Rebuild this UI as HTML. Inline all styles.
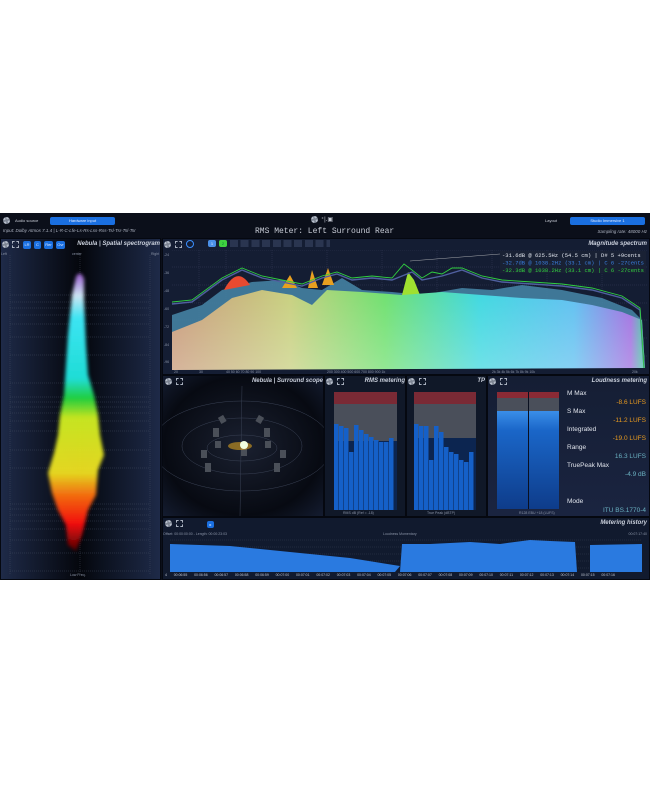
<!DOCTYPE html>
<html><head><meta charset="utf-8">
<style>
*{margin:0;padding:0;box-sizing:border-box}
body{width:650px;height:794px;background:#fff;position:relative;overflow:hidden;font-family:"Liberation Sans",sans-serif}
.a{position:absolute}
.app{left:0;top:213px;width:650px;height:367px;background:#0b0f1a}
.pan{position:absolute;background:linear-gradient(160deg,#1b2640,#0e1526 60%,#121c33);border:1px solid #050810}
.t{position:absolute;color:#c9cfdb;font-size:6px;font-style:italic;font-weight:bold;white-space:nowrap;text-align:right}
.s{position:absolute;color:#8a93a6;font-size:3.5px;white-space:nowrap}
.btn{position:absolute;background:#1a6fe0;border-radius:2px;color:#dfeaff;font-size:4px;text-align:center;line-height:8px;height:8px}
.gear{position:absolute;width:7px;height:7px;border-radius:50%;border:2px dotted #b8bfcc;background:#7d8593}
.fs{position:absolute;width:7px;height:7px;border:1px dashed #aab2c0}
</style></head><body>
<div class="a app"></div>
<!-- top bar -->
<div class="gear" style="left:3px;top:217px"></div>
<div class="s" style="left:15px;top:218px;color:#c8ccd6;font-size:4px">Audio source</div>
<div class="btn" style="left:50px;top:217px;width:65px;font-size:4px">Hardware input</div>
<div class="s" style="left:3px;top:228px;font-style:italic;font-size:4.5px;color:#aeb4c2">Input: Dolby Atmos 7.1.4 | L-R-C-Lfe-Ls-Rs-Lss-Rss-Tsl-Tsr-Tsl-Tsr</div>
<div class="gear" style="left:311px;top:216px"></div>
<div class="s" style="left:321px;top:216px;color:#c8ccd6;font-size:6px">⁺|.▣</div>
<div class="a" style="left:255px;top:227px;color:#c8ccd6;font-family:'Liberation Mono',monospace;font-size:8px;white-space:nowrap">RMS Meter: Left Surround Rear</div>
<div class="s" style="left:545px;top:218px;color:#c8ccd6;font-size:4px">Layout</div>
<div class="btn" style="left:570px;top:217px;width:75px">Studio Immersive 1</div>
<div class="s" style="right:3px;top:229px;font-style:italic;font-size:4.5px;color:#aeb4c2">Sampling rate: 48000 Hz</div>

<!-- Left panel -->
<div class="pan" style="left:0;top:238px;width:161px;height:342px;background:linear-gradient(90deg,#1e2a48,#0c111e 35%,#04060c 50%,#0c1220 65%,#1e2a48)"></div>
<div class="gear" style="left:2px;top:241px"></div><div class="fs" style="left:12px;top:241px"></div>
<div class="btn" style="left:23px;top:241px;width:8px">LR</div>
<div class="btn" style="left:34px;top:241px;width:7px">C</div>
<div class="btn" style="left:44px;top:241px;width:9px">Rer</div>
<div class="btn" style="left:56px;top:241px;width:9px">Ovr</div>
<div class="t" style="right:490px;top:241px">Nebula | Spatial spectrogram</div>
<div class="s" style="left:1px;top:252px">Left</div><div class="s" style="left:72px;top:252px">center</div><div class="s" style="left:151px;top:252px">Right</div>
<svg class="a" style="left:0;top:255px" width="160" height="325">
<defs>
<linearGradient id="sg" x1="0" y1="0" x2="0" y2="1">
<stop offset="0" stop-color="#a060d8"/><stop offset=".08" stop-color="#d8f0ff"/><stop offset=".16" stop-color="#40f0ff"/><stop offset=".38" stop-color="#20e8e0"/><stop offset=".45" stop-color="#20d840"/><stop offset=".52" stop-color="#d0f020"/><stop offset=".72" stop-color="#f0e020"/><stop offset=".8" stop-color="#ff7010"/><stop offset=".9" stop-color="#ff1010"/><stop offset="1" stop-color="#500000"/>
</linearGradient>
<filter id="bl"><feGaussianBlur stdDeviation="1.8"/></filter>
</defs>
<g stroke="#4a5468" stroke-width=".4" stroke-dasharray="1,1">
<line x1="10" y1="0" x2="10" y2="320"/><line x1="80" y1="0" x2="80" y2="320"/><line x1="150" y1="0" x2="150" y2="320"/>
<line x1="10" y1="40" x2="150" y2="40"/><line x1="10" y1="47" x2="150" y2="47"/><line x1="10" y1="53" x2="150" y2="53"/><line x1="10" y1="60" x2="150" y2="60"/><line x1="10" y1="69" x2="150" y2="69"/><line x1="10" y1="82" x2="150" y2="82"/><line x1="10" y1="100" x2="150" y2="100"/><line x1="10" y1="128" x2="150" y2="128"/>
<line x1="10" y1="142" x2="150" y2="142"/><line x1="10" y1="147" x2="150" y2="147"/><line x1="10" y1="152" x2="150" y2="152"/><line x1="10" y1="158" x2="150" y2="158"/><line x1="10" y1="166" x2="150" y2="166"/><line x1="10" y1="176" x2="150" y2="176"/><line x1="10" y1="195" x2="150" y2="195"/><line x1="10" y1="213" x2="150" y2="213"/><line x1="10" y1="249" x2="150" y2="249"/><line x1="10" y1="254" x2="150" y2="254"/><line x1="10" y1="260" x2="150" y2="260"/><line x1="10" y1="266" x2="150" y2="266"/><line x1="10" y1="274" x2="150" y2="274"/><line x1="10" y1="285" x2="150" y2="285"/><line x1="10" y1="298" x2="150" y2="298"/><line x1="10" y1="316" x2="150" y2="316"/>
</g>
<path filter="url(#bl)" fill="url(#sg)" opacity=".95" d="M76 22 Q80 14 84 24 L84 45 L86 90 L88 120 L94 140 L98 160 L100 180 L104 200 L98 215 L96 240 L88 255 L82 280 L76 296 L68 290 L66 270 L58 255 L52 238 L48 218 L54 198 L58 180 L60 160 L64 140 L66 110 L68 80 L72 40 Z"/>
</svg>
<div class="s" style="left:70px;top:573px">Low Freq.</div>

<!-- Magnitude spectrum -->
<div class="pan" style="left:162px;top:238px;width:488px;height:137px;background:#141d33"></div>
<div class="gear" style="left:164px;top:241px"></div><div class="fs" style="left:175px;top:241px"></div>
<div class="a" style="left:186px;top:240px;width:8px;height:8px;border:1px solid #3a8fff;border-radius:50%"></div>
<div class="btn" style="left:208px;top:240px;width:8px;height:7px;background:#4a90e8">1</div>
<div class="btn" style="left:219px;top:240px;width:8px;height:7px;background:#3fd040;color:#083">2</div>
<div class="a" style="left:230px;top:240px;width:100px;height:7px;background:repeating-linear-gradient(90deg,#2a3550 0 8px,transparent 8px 10.7px)"></div>
<div class="t" style="right:3px;top:241px">Magnitude spectrum</div>
<svg class="a" style="left:162px;top:250px" width="488" height="125">
<defs>
<linearGradient id="spg" x1="0" y1="0" x2="1" y2="0">
<stop offset="0" stop-color="#c89a7a"/><stop offset=".25" stop-color="#c8d080"/><stop offset=".45" stop-color="#70e070"/><stop offset=".65" stop-color="#40d8e0"/><stop offset=".85" stop-color="#60c0f0"/><stop offset=".97" stop-color="#a070e0"/><stop offset="1" stop-color="#40d0a0"/>
</linearGradient>
<linearGradient id="fd" x1="0" y1="0" x2="0" y2="1"><stop offset="0" stop-color="#fff" stop-opacity="0"/><stop offset="1" stop-color="#fff" stop-opacity=".25"/></linearGradient>
</defs>
<g stroke="#3a4560" stroke-width=".4" stroke-dasharray="1,1">
<line x1="10" y1="0" x2="485" y2="0"/><line x1="10" y1="17" x2="485" y2="17"/><line x1="10" y1="35" x2="485" y2="35"/><line x1="10" y1="53" x2="485" y2="53"/><line x1="10" y1="70" x2="485" y2="70"/><line x1="10" y1="88" x2="485" y2="88"/><line x1="10" y1="106" x2="485" y2="106"/>
<line x1="37" y1="0" x2="37" y2="118"/><line x1="64" y1="0" x2="64" y2="118"/><line x1="110" y1="0" x2="110" y2="118"/><line x1="165" y1="0" x2="165" y2="118"/><line x1="220" y1="0" x2="220" y2="118"/><line x1="275" y1="0" x2="275" y2="118"/><line x1="330" y1="0" x2="330" y2="118"/><line x1="385" y1="0" x2="385" y2="118"/><line x1="440" y1="0" x2="440" y2="118"/>
</g>
<path fill="#4a8fb0" opacity=".8" d="M10 65 L40 55 L60 40 L90 32 L120 30 L140 38 L160 40 L180 28 L200 40 L230 42 L260 45 L300 38 L330 40 L360 35 L400 40 L440 48 L470 60 L480 70 L483 118 L10 118Z"/>
<path fill="#e84a30" d="M62 40 Q75 15 88 35 Z"/>
<path fill="#e8a020" d="M120 38 L128 25 L135 38 Z M146 38 L150 20 L156 38 Z M160 35 L166 18 L172 35Z"/>
<path fill="#a0e030" d="M240 45 L246 22 L252 30 L258 45 Z"/>
<path fill="url(#spg)" d="M10 120 L10 82 L40 70 L70 48 L100 40 L130 45 L150 55 L165 40 L200 42 L240 45 L280 42 L320 45 L360 48 L400 50 L430 55 L460 62 L480 70 L483 118 Z"/>
<path fill="url(#fd)" d="M10 120 L10 82 L40 70 L70 48 L100 40 L130 45 L150 55 L165 40 L200 42 L240 45 L280 42 L320 45 L360 48 L400 50 L430 55 L460 62 L480 70 L483 118 Z"/>
<path fill="none" stroke="#5060a0" stroke-width="1.4" d="M10 54 L30 52 L60 30 L80 20 L100 28 L120 32 L140 36 L160 28 L175 24 L190 30 L210 28 L230 30 L250 22 L260 30 L280 26 L300 20 L320 28 L340 32 L370 34 L400 36 L430 40 L460 48 L478 60 L482 118"/>
<path fill="none" stroke="#30d040" stroke-width=".9" d="M10 52 L30 50 L60 28 L80 18 L100 26 L120 30 L140 34 L160 26 L175 22 L190 28 L210 26 L230 28 L242 14 L250 20 L260 28 L270 22 L280 24 L290 18 L300 18 L320 26 L340 30 L370 32 L400 34 L430 38 L460 46 L478 58 L482 118"/>
<line x1="248" y1="11" x2="338" y2="4" stroke="#ccc" stroke-width=".4"/>
<rect x="338" y="1" width="146" height="22" fill="#1a2235" opacity=".85"/>
<text x="340" y="7" font-family="Liberation Mono" font-size="5.5" fill="#e0e4ec">-31.6dB @  625.5Hz (54.5 cm) | D# 5  +9cents</text>
<text x="340" y="14.5" font-family="Liberation Mono" font-size="5.5" fill="#3a7fe0">-32.7dB @ 1038.2Hz (33.1 cm) | C 6 -27cents</text>
<text x="340" y="22" font-family="Liberation Mono" font-size="5.5" fill="#30d040">-32.3dB @ 1038.2Hz (33.1 cm) | C 6 -27cents</text>
<g font-size="3.5" fill="#8a93a6"><text x="2" y="6">-24</text><text x="2" y="24">-36</text><text x="2" y="42">-48</text><text x="2" y="60">-60</text><text x="2" y="78">-72</text><text x="2" y="96">-84</text><text x="2" y="113">-96</text>
<text x="12" y="123">20</text><text x="37" y="123">30</text><text x="64" y="123">40 50 60 70 80 90 100</text><text x="165" y="123">200 300 400 500 600 700 800 900 1k</text><text x="330" y="123">2k 3k 4k 5k 6k 7k 8k 9k 10k</text><text x="470" y="123">20k</text></g>
</svg>

<!-- Surround scope -->
<div class="pan" style="left:162px;top:375px;width:162px;height:142px;background:radial-gradient(ellipse at 50% 50%,#1a2030,#070a12 70%,#141c30)"></div>
<div class="gear" style="left:165px;top:378px"></div><div class="fs" style="left:176px;top:378px"></div>
<div class="t" style="right:327px;top:378px">Nebula | Surround scope</div>
<svg class="a" style="left:162px;top:386px" width="162" height="130">
<g fill="none" stroke="#3a4255" stroke-width=".5"><ellipse cx="80" cy="60" rx="90" ry="45"/><ellipse cx="80" cy="60" rx="60" ry="28"/><ellipse cx="80" cy="62" rx="35" ry="13"/><line x1="80" y1="0" x2="78" y2="130"/></g>
<g fill="#4a4f58"><rect x="57" y="30" width="6" height="7" transform="rotate(-30 60 33)"/><rect x="95" y="30" width="6" height="7" transform="rotate(30 98 33)"/><rect x="51" y="42" width="6" height="9"/><rect x="102" y="42" width="6" height="9"/><rect x="53" y="55" width="6" height="7"/><rect x="103" y="55" width="6" height="7"/><rect x="39" y="64" width="6" height="8"/><rect x="118" y="64" width="6" height="8"/><rect x="43" y="77" width="6" height="9"/><rect x="112" y="77" width="6" height="9"/><rect x="79" y="58" width="6" height="12"/></g>
<ellipse cx="78" cy="60" rx="12" ry="4" fill="#d8a020" opacity=".6"/>
<circle cx="82" cy="59" r="4" fill="#f0ffe0"/>
</svg>

<!-- RMS -->
<div class="pan" style="left:324px;top:375px;width:82px;height:142px;background:#101828"></div>
<div class="gear" style="left:326px;top:378px"></div><div class="fs" style="left:337px;top:378px"></div>
<div class="t" style="right:245px;top:378px">RMS metering</div>
<div class="a" style="left:334px;top:392px;width:63px;height:12px;background:#7a2a35"></div>
<div class="a" style="left:334px;top:404px;width:63px;height:37px;background:#4a4f5a"></div>
<div class="a" style="left:334px;top:441px;width:63px;height:69px;background:#0c2550"></div>
<svg class="a" style="left:334px;top:392px" width="63" height="118">
<g fill="#1560c8"><rect x="0" y="32" width="4.5" height="86"/><rect x="5" y="34" width="4.5" height="84"/><rect x="10" y="36" width="4.5" height="82"/><rect x="15" y="60" width="4.5" height="58"/><rect x="20" y="33" width="4.5" height="85"/><rect x="25" y="38" width="4.5" height="80"/><rect x="30" y="42" width="4.5" height="76"/><rect x="35" y="45" width="4.5" height="73"/><rect x="40" y="48" width="4.5" height="70"/><rect x="45" y="50" width="4.5" height="68"/><rect x="50" y="50" width="4.5" height="68"/><rect x="55" y="46" width="4.5" height="72"/></g>
</svg>
<div class="s" style="left:343px;top:511px">RMS dB (Ref = -18)</div>

<!-- TP -->
<div class="pan" style="left:406px;top:375px;width:81px;height:142px;background:#101828"></div>
<div class="gear" style="left:408px;top:378px"></div><div class="fs" style="left:419px;top:378px"></div>
<div class="t" style="right:165px;top:378px">TP</div>
<div class="a" style="left:414px;top:392px;width:62px;height:12px;background:#7a2a35"></div>
<div class="a" style="left:414px;top:404px;width:62px;height:34px;background:#4a4f5a"></div>
<div class="a" style="left:414px;top:438px;width:62px;height:72px;background:#0c2550"></div>
<svg class="a" style="left:414px;top:392px" width="62" height="118">
<g fill="#1560c8"><rect x="0" y="32" width="4.5" height="86"/><rect x="5" y="34" width="4.5" height="84"/><rect x="10" y="34" width="4.5" height="84"/><rect x="15" y="68" width="4.5" height="50"/><rect x="20" y="34" width="4.5" height="84"/><rect x="25" y="40" width="4.5" height="78"/><rect x="30" y="55" width="4.5" height="63"/><rect x="35" y="60" width="4.5" height="58"/><rect x="40" y="62" width="4.5" height="56"/><rect x="45" y="68" width="4.5" height="50"/><rect x="50" y="70" width="4.5" height="48"/><rect x="55" y="60" width="4.5" height="58"/></g>
</svg>
<div class="s" style="left:427px;top:511px">True Peak (dBTP)</div>

<!-- Loudness -->
<div class="pan" style="left:487px;top:375px;width:163px;height:142px;background:linear-gradient(180deg,#151e34,#1a2440)"></div>
<div class="gear" style="left:489px;top:378px"></div><div class="fs" style="left:500px;top:378px"></div>
<div class="t" style="right:3px;top:378px">Loudness metering</div>
<div class="a" style="left:497px;top:392px;width:62px;height:6px;background:#8a2a35"></div>
<div class="a" style="left:497px;top:398px;width:62px;height:13px;background:#4a4f5a"></div>
<div class="a" style="left:497px;top:411px;width:62px;height:98px;background:linear-gradient(180deg,#3a8ee8,#1a66c8 20%,#0e3c8a)"></div>
<div class="a" style="left:528px;top:392px;width:1px;height:117px;background:#0a1020"></div>
<div class="s" style="left:519px;top:511px">R128 EBU +18 (LUFS)</div>
<div class="a" style="left:567px;top:385px;font-size:6.5px;color:#e0e4ec;line-height:18px;width:80px;white-space:nowrap">M Max<br>S Max<br>Integrated<br>Range<br>TruePeak Max<br><br>Mode</div>
<div class="a" style="right:4px;top:394px;font-size:6.5px;line-height:18px;width:80px;text-align:right;color:#e89a20;white-space:nowrap">-8.6 LUFS<br>-11.2 LUFS<br>-19.0 LUFS<br><span style="color:#6ab0c0">16.3 LUFS<br>-4.9 dB<br><br>ITU BS.1770-4</span></div>

<!-- Metering history -->
<div class="pan" style="left:162px;top:517px;width:488px;height:63px;background:#111a2e"></div>
<div class="gear" style="left:165px;top:520px"></div><div class="fs" style="left:176px;top:520px"></div>
<div class="btn" style="left:207px;top:521px;width:7px;height:7px">▸</div>
<div class="t" style="right:3px;top:520px">Metering history</div>
<div class="s" style="left:163px;top:532px">Offset: 00:00:00:00 - Length: 00:00:23:03</div>
<div class="s" style="left:383px;top:532px">Loudness Momentary</div>
<div class="s" style="right:3px;top:532px">00:07:17:40</div>
<svg class="a" style="left:170px;top:538px" width="472" height="36">
<g stroke="#3a4258" stroke-width=".4" stroke-dasharray="1,1"><line x1="0" y1="2" x2="472" y2="2"/><line x1="0" y1="9" x2="472" y2="9"/><line x1="0" y1="16" x2="472" y2="16"/><line x1="0" y1="23" x2="472" y2="23"/><line x1="0" y1="30" x2="472" y2="30"/></g>
<path fill="#2a7ae0" d="M0 6 L60 8 L120 14 L180 20 L230 28 L225 34 L0 34 Z M230 34 L232 6 L260 6 L300 4 L330 6 L360 2 L380 3 L405 4 L407 34 Z M420 34 L420 7 L472 6 L472 34 Z"/>
</svg>
<div class="a" style="left:165px;top:573px;width:450px;display:flex;justify-content:space-between;color:#c0c6d2;font-size:3.5px;white-space:nowrap"><span>4</span><span>00:06:55</span><span>00:06:56</span><span>00:06:57</span><span>00:06:58</span><span>00:06:59</span><span>00:07:00</span><span>00:07:01</span><span>00:07:02</span><span>00:07:03</span><span>00:07:04</span><span>00:07:05</span><span>00:07:06</span><span>00:07:07</span><span>00:07:08</span><span>00:07:09</span><span>00:07:10</span><span>00:07:11</span><span>00:07:12</span><span>00:07:13</span><span>00:07:14</span><span>00:07:15</span><span>00:07:16</span></div>
</body></html>
